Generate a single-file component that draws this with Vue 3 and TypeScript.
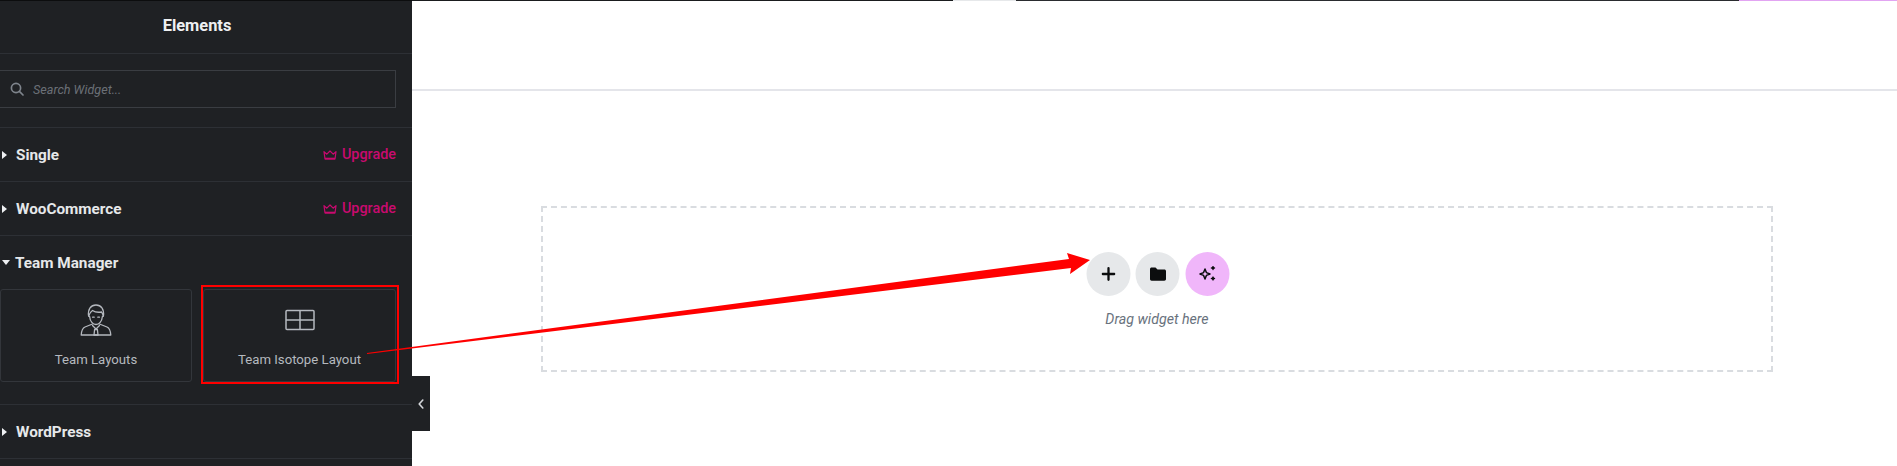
<script setup lang="ts">
interface Section { name: string; pro: boolean }
const topSections: Section[] = [
  { name: 'Single', pro: true },
  { name: 'WooCommerce', pro: true },
]
</script>

<template>
  <div class="page">
    <aside class="panel">
      <header class="panel-head">Elements</header>
      <div class="search-wrap">
        <div class="search">
          <svg class="search-icon" width="14" height="14" viewBox="0 0 14 14" fill="none" stroke="#7e848c" stroke-width="1.7">
            <circle cx="6" cy="6" r="4.6" />
            <path d="M9.4 9.4L13 13" stroke-linecap="round" />
          </svg>
          <span>Search Widget...</span>
        </div>
      </div>
      <section v-for="s in topSections" :key="s.name" class="cat">
        <span class="caret-right"></span>
        <span class="cat-name">{{ s.name }}</span>
        <span class="upgrade">
          <svg width="14" height="10" viewBox="0 0 14 10" fill="none" stroke="#c90a6f" stroke-width="1.2" stroke-linejoin="round">
            <path d="M1 1.6L3.8 4.2L7 1L10.2 4.2L13 1.6L12 9H2Z" />
            <path d="M2 8.6H12" stroke-width="1.8" />
          </svg>
          Upgrade
        </span>
      </section>
      <section class="team">
        <div class="team-head">
          <span class="caret-down"></span>
          <span class="cat-name">Team Manager</span>
        </div>
        <div class="cards">
          <div class="card">
            <svg width="32" height="32" viewBox="0 0 32 32" fill="none" stroke="#b5b9bf" stroke-width="1.3" stroke-linejoin="round" stroke-linecap="round">
              <path d="M8.6 12C7.6 5 11 1 16 1C21 1 24.4 5 23.4 12" />
              <path d="M8.6 12C9.5 9 11 7.5 12.5 6.5C15 8.2 19 8.4 21.5 8C22.5 9 23 10.5 23.4 12" />
              <path d="M9.6 12.5C10 17.5 13 20.5 16 20.5C19 20.5 22 17.5 22.4 12.5" />
              <path d="M12.6 13.2H14.2M17.8 13.2H19.4" />
              <path d="M12.5 20L5 23C2.6 24 1.5 26.5 1.2 31H30.8C30.5 26.5 29.4 24 27 23L19.5 20" />
              <path d="M12.5 21.5L16 25L19.5 21.5M14.6 25.5H17.4L18 31H14Z" />
            </svg>
            <span class="card-label">Team Layouts</span>
          </div>
          <div class="card">
            <svg width="30" height="21" viewBox="0 0 30 21" fill="none" stroke="#b5b9bf" stroke-width="1.5" stroke-linejoin="round">
              <rect x="1" y="1" width="28" height="19" rx="1" />
              <path d="M1 10.5H29M15 1V20" />
            </svg>
            <span class="card-label">Team Isotope Layout</span>
          </div>
        </div>
      </section>
      <section class="cat">
        <span class="caret-right"></span>
        <span class="cat-name">WordPress</span>
      </section>
    </aside>

    <main class="canvas">
      <div class="top-strip">
        <span class="strip-a"></span>
        <span class="strip-b"></span>
        <span class="strip-c"></span>
        <span class="strip-d"></span>
      </div>
      <div class="header-block"></div>
      <div class="drop-area">
        <div class="dropzone">
          <div class="buttons">
            <span class="round">
              <svg width="14" height="14" viewBox="0 0 14 14" fill="none" stroke="#0c0d0e" stroke-width="2.3" stroke-linecap="round">
                <path d="M7 1.2V12.8M1.2 7H12.8" />
              </svg>
            </span>
            <span class="round">
              <svg width="17" height="14" viewBox="0 0 17 14" fill="#0c0d0e">
                <path d="M0.5 2.2C0.5 1.2 1.2 0.5 2.2 0.5H6L8 2.6H14.8C15.8 2.6 16.5 3.3 16.5 4.3V12C16.5 13 15.8 13.7 14.8 13.7H2.2C1.2 13.7 0.5 13 0.5 12Z" />
              </svg>
            </span>
            <span class="round ai">
              <svg width="17" height="17" viewBox="0 0 17 17" fill="none" stroke="#0c0d0e" stroke-width="1.5" stroke-linejoin="round">
                <path d="M6.5 3L7.9 6.6L11.5 8L7.9 9.4L6.5 13L5.1 9.4L1.5 8L5.1 6.6Z" />
                <path d="M14.5 -0.6L15.5 1L17.1 2L15.5 3L14.5 4.6L13.5 3L11.9 2L13.5 1Z" fill="#0c0d0e" stroke="none" />
                <path d="M14.5 9.9L15.5 11.5L17.1 12.5L15.5 13.5L14.5 15.1L13.5 13.5L11.9 12.5L13.5 11.5Z" fill="#0c0d0e" stroke="none" />
              </svg>
            </span>
          </div>
          <p class="drag-text">Drag widget here</p>
        </div>
      </div>
    </main>

    <div class="collapse">
      <svg width="6" height="10" viewBox="0 0 6 10" fill="none" stroke="#d5d8dc" stroke-width="1.6" stroke-linecap="round" stroke-linejoin="round">
        <path d="M4.8 1L1.2 5L4.8 9" />
      </svg>
    </div>

    <div class="red-box"></div>
    <svg class="arrow" width="1897" height="466" viewBox="0 0 1897 466">
      <polygon fill="#ff0000" points="367,353 1069,259 1067,253 1090,260 1070,274 1071,268 367,354" />
    </svg>
  </div>
</template>

<style>
html, body { margin: 0; background: #fff; }
</style>

<style scoped>
.page {
  position: relative;
  display: flex;
  width: 1897px;
  height: 466px;
  overflow: hidden;
  background: #fff;
  font-family: Roboto, "Liberation Sans", sans-serif;
}
.panel {
  flex: 0 0 412px;
  height: 466px;
  box-sizing: border-box;
  background: #1f2124;
  border-top: 1px solid #0c0d0e;
  color: #e6e8ea;
}
.panel-head {
  height: 53px;
  line-height: 50px;
  box-sizing: border-box;
  border-bottom: 1px solid #2d3035;
  padding-right: 18px;
  text-align: center;
  font-size: 16.4px;
  font-weight: 700;
  color: #eef0f2;
}
.search-wrap {
  height: 74px;
  box-sizing: border-box;
  padding: 16px 16px 0 0;
  border-bottom: 1px solid #2d3035;
}
.search {
  display: flex;
  align-items: center;
  gap: 9px;
  height: 38px;
  box-sizing: border-box;
  padding-left: 10px;
  border: 1px solid #3a3d42;
  border-left: 0;
  font-size: 12.6px;
  font-style: italic;
  color: #6b7077;
}
.search-icon { flex: none; }
.cat {
  display: flex;
  align-items: center;
  height: 54px;
  box-sizing: border-box;
  padding-right: 16px;
  border-bottom: 1px solid #2d3035;
}
.cat-name {
  margin-left: 9px;
  font-size: 15.3px;
  font-weight: 700;
  color: #e6e8ea;
}
.caret-right {
  width: 0;
  height: 0;
  margin-left: 2px;
  border-left: 5px solid #eef0f2;
  border-top: 4.5px solid transparent;
  border-bottom: 4.5px solid transparent;
}
.caret-down {
  width: 0;
  height: 0;
  margin-left: 2px;
  margin-right: -4px;
  border-top: 5px solid #eef0f2;
  border-left: 4.5px solid transparent;
  border-right: 4.5px solid transparent;
}
.upgrade {
  display: flex;
  align-items: center;
  gap: 5px;
  margin-left: auto;
  font-size: 14.4px;
  font-weight: 500;
  color: #c90a6f;
}
.team {
  height: 169px;
  box-sizing: border-box;
  padding-right: 16px;
  border-bottom: 1px solid #2d3035;
}
.team-head {
  display: flex;
  align-items: center;
  height: 53px;
}
.cards {
  display: grid;
  grid-template-columns: 192px 193px;
  gap: 11px;
}
.card {
  display: flex;
  flex-direction: column;
  align-items: center;
  box-sizing: border-box;
  height: 93px;
  padding-top: 14px;
  border: 1px solid #33363b;
  border-radius: 3px;
}
.card svg { flex: none; height: 32px; }
.card-label {
  margin-top: 16px;
  font-size: 13.2px;
  font-weight: 400;
  color: #b5b9bf;
}
.canvas {
  flex: 1;
  display: flex;
  flex-direction: column;
  min-width: 0;
}
.top-strip {
  display: flex;
  height: 1px;
}
.strip-a { width: 541px; background: #1a1c1e; }
.strip-b { width: 63px; background: #e6e8ea; }
.strip-c { width: 723px; background: #2a2c2f; }
.strip-d { flex: 1; background: #e2a4f2; }
.header-block {
  height: 90px;
  box-sizing: border-box;
  border-bottom: 2px solid #e4e5ea;
}
.drop-area {
  flex: 1;
  padding: 115px 0 0 129px;
}
.dropzone {
  width: 1232px;
  height: 166px;
  box-sizing: border-box;
  border: 2px dashed #d9dce0;
  display: flex;
  flex-direction: column;
  align-items: center;
  padding-top: 44px;
}
.buttons {
  display: flex;
  gap: 5.5px;
  transform: translateX(0.5px);
}
.round {
  display: flex;
  align-items: center;
  justify-content: center;
  width: 44px;
  height: 44px;
  border-radius: 50%;
  background: #e6e8ea;
}
.round.ai { background: #f0b6fa; }
.drag-text {
  margin: 15px 0 0;
  font-size: 14.2px;
  font-style: italic;
  color: #69727d;
}
.collapse {
  position: absolute;
  left: 412px;
  top: 376px;
  width: 18px;
  height: 55px;
  display: flex;
  align-items: center;
  justify-content: center;
  background: #1f2124;
}
.red-box {
  position: absolute;
  left: 201px;
  top: 285px;
  width: 198px;
  height: 99px;
  box-sizing: border-box;
  border: 2.5px solid #f00;
}
.arrow {
  position: absolute;
  inset: 0;
  pointer-events: none;
}
</style>
